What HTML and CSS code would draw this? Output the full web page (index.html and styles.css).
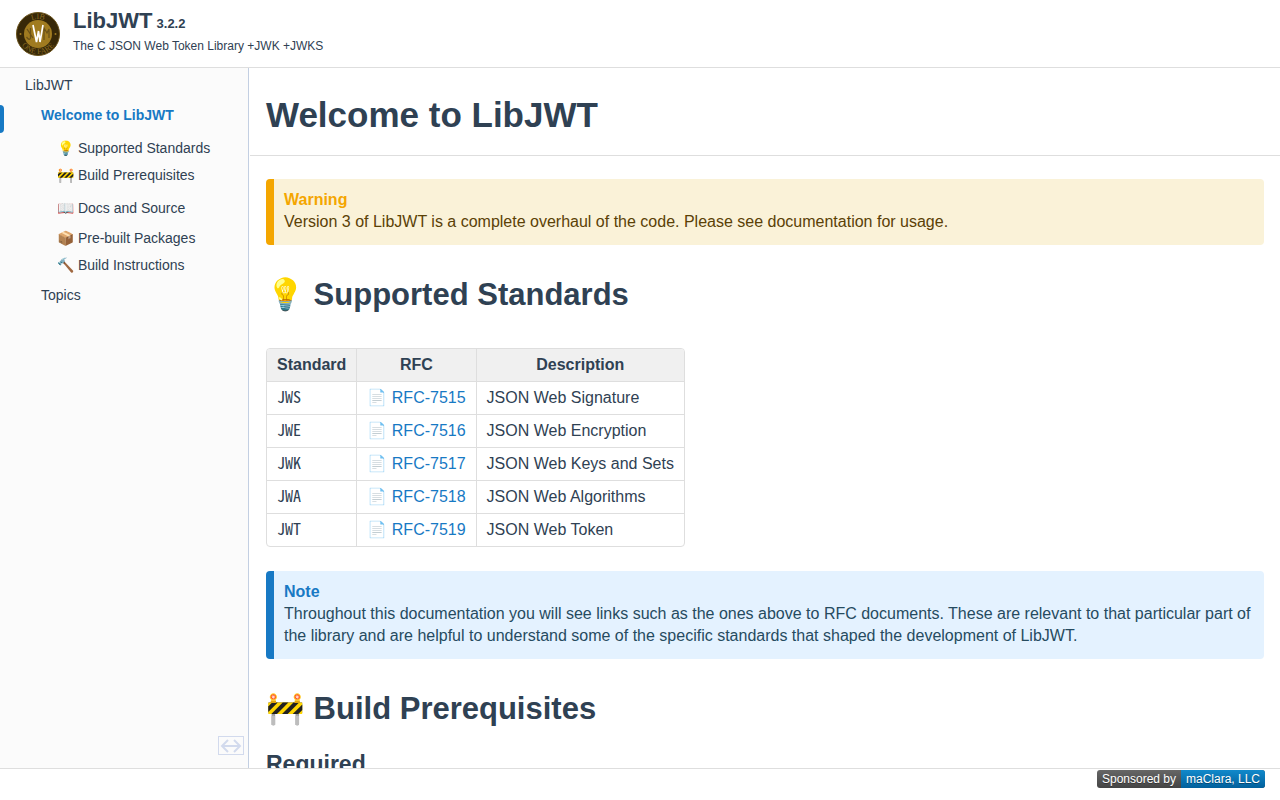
FILE: index.html
```html
<!DOCTYPE html>
<html lang="en">
<head>
    <meta charset="UTF-8">
    <meta name="viewport" content="width=device-width, initial-scale=1.0">
    <title>LibJWT: Welcome to LibJWT</title>
    <link rel="stylesheet" href="styles.css">
</head>
<body>
    <header class="titlearea">
        <svg class="logo" viewBox="0 0 44 44" role="img" aria-label="LibJWT logo">
            <defs>
                <path id="arc-top" d="M7 22a15 15 0 0 1 30 0"/>
                <path id="arc-bottom" d="M2 22a20 20 0 0 0 40 0"/>
            </defs>
            <circle cx="22" cy="22" r="21.500" fill="#372808" stroke="#6b531b"/>
            <circle cx="22" cy="22" r="14" fill="#a07b20"/>
            <g class="logo-text">
                <text><textPath href="#arc-top" startOffset="50%">LIB</textPath></text>
                <text><textPath href="#arc-bottom" startOffset="50%">ONE FARE</textPath></text>
            </g>
            <path d="M14.500 16v10q-1 3-4-1M11 17l6 9M28 28V16l3 5 2-4v9" fill="none" stroke="#6b5218" stroke-width="1.300"/>
            <path d="M17 13l3.500 17 2-11 1.500 11 3-17" fill="none" stroke="#fff" stroke-width="1.700"/>
            <circle cx="4.500" cy="22" r="1" fill="#a07b20"/>
            <circle cx="39.500" cy="22" r="1" fill="#a07b20"/>
        </svg>
        <div>
            <div class="projectname">LibJWT <span class="projectnumber">3.2.2</span></div>
            <div class="projectbrief">The C JSON Web Token Library +JWK +JWKS</div>
        </div>
    </header>

    <div class="wrapper">
        <nav class="sidenav">
            <ul class="tree">
                <li><a href="#">LibJWT</a>
                    <ul>
                        <li class="gap"><a class="selected" href="#welcome">Welcome to LibJWT</a>
                            <ul>
                                <li class="gap-big"><a href="#standards">💡 Supported Standards</a></li>
                                <li><a href="#prereqs">🚧 Build Prerequisites</a></li>
                                <li class="gap-big"><a href="#docs">📖 Docs and Source</a></li>
                                <li class="gap"><a href="#packages">📦 Pre-built Packages</a></li>
                                <li><a href="#build">🔨 Build Instructions</a></li>
                            </ul>
                        </li>
                        <li class="gap"><a href="#topics">Topics</a></li>
                    </ul>
                </li>
            </ul>
            <button class="sync" type="button" aria-label="Toggle sync">
                <svg viewBox="0 0 24 16" width="24" height="16" fill="none" stroke="#d2daed" stroke-width="2">
                    <path d="M3 8h18M9 2L3 8l6 6M15 2l6 6-6 6"/>
                </svg>
            </button>
        </nav>

        <main class="doc">
            <div class="header">
                <h1 id="welcome">Welcome to LibJWT</h1>
            </div>
            <div class="contents">
                <dl class="warning">
                    <dt>Warning</dt>
                    <dd>Version 3 of LibJWT is a complete overhaul of the code. Please see documentation for usage.</dd>
                </dl>

                <h2 id="standards">💡 Supported Standards</h2>
                <table class="markdown">
                    <thead>
                        <tr><th>Standard</th><th>RFC</th><th>Description</th></tr>
                    </thead>
                    <tbody>
                        <tr><td><code>JWS</code></td><td>📄 <a href="#7515">RFC-7515</a></td><td>JSON Web Signature</td></tr>
                        <tr><td><code>JWE</code></td><td>📄 <a href="#7516">RFC-7516</a></td><td>JSON Web Encryption</td></tr>
                        <tr><td><code>JWK</code></td><td>📄 <a href="#7517">RFC-7517</a></td><td>JSON Web Keys and Sets</td></tr>
                        <tr><td><code>JWA</code></td><td>📄 <a href="#7518">RFC-7518</a></td><td>JSON Web Algorithms</td></tr>
                        <tr><td><code>JWT</code></td><td>📄 <a href="#7519">RFC-7519</a></td><td>JSON Web Token</td></tr>
                    </tbody>
                </table>

                <dl class="note">
                    <dt>Note</dt>
                    <dd>Throughout this documentation you will see links such as the ones above to RFC documents. These are relevant to that particular part of the library and are helpful to understand some of the specific standards that shaped the development of LibJWT.</dd>
                </dl>

                <h2 id="prereqs">🚧 Build Prerequisites</h2>
                <h3>Required</h3>
            </div>
        </main>
    </div>

    <footer class="footer">
        <a class="badge" href="#sponsor"><span>Sponsored by</span><span class="badge-name">maClara, LLC</span></a>
    </footer>
</body>
</html>
```
FILE: styles.css
```css
* {
    box-sizing: border-box;
}

body {
    display: flex;
    flex-direction: column;
    height: 100vh;
    margin: 0;
    font-family: "Liberation Sans", Arial, sans-serif;
    font-size: 16px;
    line-height: 22px;
    color: #2f4153;
    background-color: #fff;
}

a {
    color: #1779c4;
    text-decoration: none;
}

/* top bar */
.titlearea {
    display: flex;
    gap: 13px;
    padding: 8px 16px 9px;
    border-bottom: 1px solid #dedede;
}

.logo {
    width: 44px;
    height: 44px;
    margin-top: 4px;
}

.logo-text {
    font-family: "Liberation Serif", serif;
    font-size: 8px;
    fill: #8b6b20;
    text-anchor: middle;
}

.projectname {
    font-size: 22px;
    font-weight: bold;
    line-height: 26px;
}

.projectnumber {
    font-size: 13px;
    line-height: 16px;
    margin-left: -2px;
}

.projectbrief {
    font-size: 12px;
    line-height: 24px;
}

.wrapper {
    display: flex;
    flex: 1;
    min-height: 0;
}

/* navigation tree */
.sidenav {
    position: relative;
    flex: 0 0 249px;
    padding-top: 4px;
    border-right: 1px solid #c3cfe2;
    background-color: #fbfbfb;
    font-size: 14px;
    line-height: 27px;
}

.tree,
.tree ul {
    margin: 0;
    padding: 0 0 0 16px;
    list-style: none;
}

.tree {
    padding-left: 25px;
}

.tree a {
    display: block;
    height: 27px;
    color: #2f4153;
    white-space: nowrap;
}

.tree .gap {
    margin-top: 3px;
}

.tree .gap-big {
    margin-top: 6px;
}

.tree .selected {
    color: #1779c4;
    font-weight: bold;
}

.selected::before {
    content: "";
    position: absolute;
    left: 0;
    width: 4px;
    height: 28px;
    margin-top: 3px;
    border-radius: 0 4px 4px 0;
    background-color: #1779c4;
}

.sync {
    position: absolute;
    right: 4px;
    bottom: 13px;
    width: 26px;
    height: 19px;
    padding: 0;
    border: 1px solid #d2daed;
    background: none;
}

.sync svg {
    display: block;
}

/* page content */
.doc {
    flex: 1;
    min-width: 0;
    overflow: auto;
    scrollbar-width: none;
}

.header {
    margin-left: 1px;
    padding: 24px 16px 17px;
    border-bottom: 1px solid #dedede;
}

h1 {
    margin: 0;
    font-size: 35px;
    line-height: 46px;
}

.contents {
    padding: 23px 16px 0 17px;
}

dl {
    margin: 0;
    padding: 10px;
    border-left: 8px solid;
    border-radius: 4px;
}

dt {
    font-weight: bold;
}

dd {
    margin: 0 0 2px;
}

.warning {
    border-color: #f4a600;
    background-color: #faf2d8;
    color: #5b4106;
}

.warning dt {
    color: #f4a600;
}

.note {
    border-color: #1879c4;
    background-color: #e4f2ff;
    color: #264b5f;
}

.note dt {
    color: #1879c4;
}

h2 {
    margin: 28px 0 32px;
    font-size: 31px;
    line-height: 43px;
}

h3 {
    margin: -14px 0 0;
    font-size: 23px;
    line-height: 32px;
}

.markdown {
    margin-bottom: 24px;
    border: 1px solid #dedede;
    border-radius: 4px;
    border-spacing: 0;
    overflow: hidden;
}

.markdown th,
.markdown td {
    height: 33px;
    padding: 5px 10px;
    border-bottom: 1px solid #dedede;
    border-right: 1px solid #dedede;
    white-space: nowrap;
}

.markdown th {
    background-color: #f0f0f0;
}

.markdown th:last-child,
.markdown td:last-child {
    border-right: 0;
}

.markdown tbody tr:last-child td {
    height: 32px;
    border-bottom: 0;
}

code {
    font-family: "Noto Sans Mono CJK JP", "Noto Sans Mono CJK SC", "Liberation Mono", monospace;
    font-size: 16px;
    line-height: 16px;
}

/* footer */
.footer {
    display: flex;
    justify-content: flex-end;
    align-items: flex-start;
    height: 32px;
    padding: 1px 15px 0;
    border-top: 1px solid #dedede;
}

.badge {
    display: flex;
    overflow: hidden;
    border-radius: 3px;
    font-size: 12px;
    line-height: 18px;
    color: #fff;
    text-align: center;
    text-shadow: 0 1px #0005;
    background: linear-gradient(#666, #444);
}

.badge span {
    width: 84px;
}

.badge .badge-name {
    background: linear-gradient(#1189cb, #02609c);
}
```
